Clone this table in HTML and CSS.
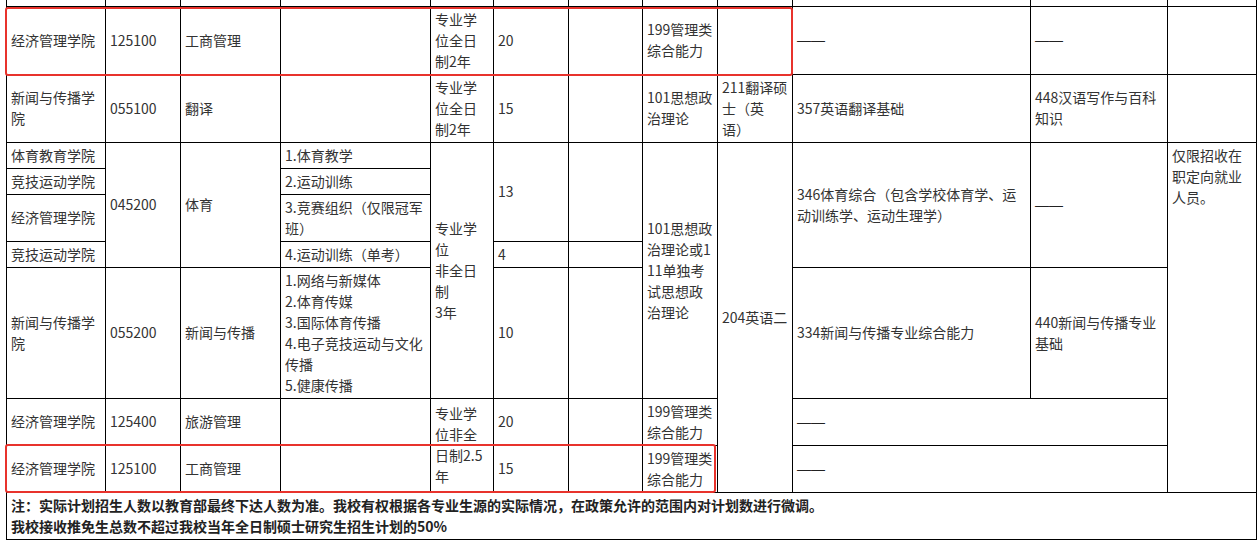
FILE: index.html
```html
<!DOCTYPE html>
<html lang="zh-CN">
<head>
<meta charset="utf-8">
<title>招生计划</title>
<link rel="stylesheet" href="styles.css">
</head>
<body>
<div class="page">
  <table class="plan">
    <colgroup>
      <col class="c1"><col class="c2"><col class="c3"><col class="c4"><col class="c5"><col class="c6">
      <col class="c7"><col class="c8"><col class="c9"><col class="c10"><col class="c11"><col class="c12">
    </colgroup>
    <tbody>
      <tr class="cut">
        <td></td><td></td><td></td><td></td><td></td><td></td><td></td><td></td><td></td><td></td><td></td><td></td>
      </tr>
      <tr>
        <td>经济管理学院</td>
        <td>125100</td>
        <td>工商管理</td>
        <td></td>
        <td>专业学位全日制2年</td>
        <td>20</td>
        <td></td>
        <td>199管理类综合能力</td>
        <td></td>
        <td><span class="dash">——</span></td>
        <td><span class="dash">——</span></td>
        <td></td>
      </tr>
      <tr>
        <td>新闻与传播学院</td>
        <td>055100</td>
        <td>翻译</td>
        <td></td>
        <td>专业学位全日制2年</td>
        <td>15</td>
        <td></td>
        <td>101思想政治理论</td>
        <td>211翻译硕士（英语）</td>
        <td>357英语翻译基础</td>
        <td>448汉语写作与百科知识</td>
        <td></td>
      </tr>
      <tr>
        <td>体育教育学院</td>
        <td rowspan="4">045200</td>
        <td rowspan="4">体育</td>
        <td>1.体育教学</td>
        <td rowspan="5">专业学位<br>非全日制<br>3年</td>
        <td rowspan="3">13</td>
        <td rowspan="3"></td>
        <td rowspan="5">101思想政治理论或111单独考试思想政治理论</td>
        <td rowspan="7">204英语二</td>
        <td rowspan="4">346体育综合（包含学校体育学、运动训练学、运动生理学）</td>
        <td rowspan="4"><span class="dash">——</span></td>
        <td rowspan="7" class="top">仅限招收在职定向就业人员。</td>
      </tr>
      <tr>
        <td>竞技运动学院</td>
        <td>2.运动训练</td>
      </tr>
      <tr>
        <td>经济管理学院</td>
        <td>3.竞赛组织（仅限冠军班）</td>
      </tr>
      <tr>
        <td>竞技运动学院</td>
        <td>4.运动训练（单考）</td>
        <td>4</td>
        <td></td>
      </tr>
      <tr>
        <td>新闻与传播学院</td>
        <td>055200</td>
        <td>新闻与传播</td>
        <td>1.网络与新媒体<br>2.体育传媒<br>3.国际体育传播<br>4.电子竞技运动与文化传播<br>5.健康传播</td>
        <td>10</td>
        <td></td>
        <td>334新闻与传播专业综合能力</td>
        <td>440新闻与传播专业基础</td>
      </tr>
      <tr>
        <td>经济管理学院</td>
        <td>125400</td>
        <td>旅游管理</td>
        <td></td>
        <td rowspan="2">专业学位非全日制2.5年</td>
        <td>20</td>
        <td></td>
        <td>199管理类综合能力</td>
        <td colspan="2"><span class="dash">——</span></td>
      </tr>
      <tr>
        <td>经济管理学院</td>
        <td>125100</td>
        <td>工商管理</td>
        <td></td>
        <td>15</td>
        <td></td>
        <td>199管理类综合能力</td>
        <td colspan="2"><span class="dash">——</span></td>
      </tr>
      <tr>
        <td colspan="12" class="note">注：实际计划招生人数以教育部最终下达人数为准。我校有权根据各专业生源的实际情况，在政策允许的范围内对计划数进行微调。<br>我校接收推免生总数不超过我校当年全日制硕士研究生招生计划的50%</td>
      </tr>
    </tbody>
  </table>
  <div class="mark mark-a"></div>
  <div class="mark mark-b"></div>
</div>
</body>
</html>
```

FILE: styles.css
```css
* {
  box-sizing: border-box;
}

html,
body {
  margin: 0;
  padding: 0;
  background: #ffffff;
}

body {
  font-family: "Noto Sans CJK SC", "Microsoft YaHei", sans-serif;
  font-size: 14px;
  color: #333333;
}

.page {
  position: relative;
  width: 1259px;
  height: 545px;
  overflow: hidden;
  padding-left: 6px;
}

.plan {
  border-collapse: collapse;
  table-layout: fixed;
  width: 1250px;
}

.c1 { width: 99px; }
.c2 { width: 75px; }
.c3 { width: 100px; }
.c4 { width: 150px; }
.c5 { width: 63px; }
.c6 { width: 75px; }
.c7 { width: 74px; }
.c8 { width: 75px; }
.c9 { width: 75px; }
.c10 { width: 238px; }
.c11 { width: 137px; }
.c12 { width: 89px; }

.plan td {
  border: 1px solid #000000;
  padding: 2px 4px;
  line-height: 21px;
  vertical-align: middle;
  word-break: break-all;
  text-align: left;
  text-spacing-trim: space-all;
}

.plan .cut td {
  height: 6px;
  padding: 0;
  border-top: none;
}

.plan td.top {
  vertical-align: top;
}

.plan td.note {
  font-weight: bold;
  color: #222222;
}

.dash {
  font-family: "Liberation Sans", Arial, sans-serif;
  font-size: 14px;
  color: #222222;
}

.mark {
  position: absolute;
  border: 2px solid #e8332c;
  border-radius: 3px;
}

.mark-a {
  left: 5px;
  top: 7px;
  width: 788px;
  height: 69px;
}

.mark-b {
  left: 5px;
  top: 444px;
  width: 711px;
  height: 49px;
}
```
